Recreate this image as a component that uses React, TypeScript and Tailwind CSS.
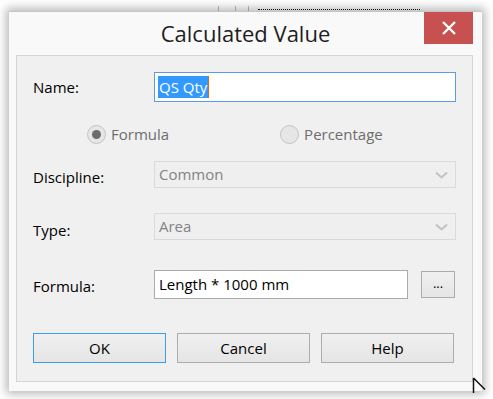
import React from "react";

const font = { fontFamily: '"Open Sans", "Noto Sans", sans-serif' };

function Chevron() {
  return (
    <svg width="13" height="8" viewBox="0 0 13 8" className="mr-[7px]">
      <path d="M1 1.5 L6.5 6.5 L12 1.5" fill="none" stroke="#c2c2c2" strokeWidth="2" />
    </svg>
  );
}

function Radio({ checked, label }: { checked?: boolean; label: string }) {
  return (
    <div className="flex items-center">
      <div className="w-[19px] h-[19px] rounded-full border border-[#c4c4c4] bg-[#e6e6e6] flex items-center justify-center">
        {checked && <div className="w-[9px] h-[9px] rounded-full bg-[#6d6d6d]" />}
      </div>
      <span className="ml-[5px] text-[15px] text-[#6d6d6d] leading-none">{label}</span>
    </div>
  );
}

export default function App() {
  return (
    <div className="w-[493px] h-[399px] bg-white relative overflow-hidden" style={font}>
      {/* background behind window */}
      <div className="absolute left-[258px] top-[9px] w-[162px] border-t border-dotted border-[#111]" />
      <div className="absolute left-[218px] top-[6px] w-[1px] h-[5px] bg-[#bbb]" />
      <div className="absolute left-[235px] top-[6px] w-[1px] h-[5px] bg-[#bbb]" />
      <div className="absolute left-[248px] top-[6px] w-[1px] h-[5px] bg-[#bbb]" />

      <div className="absolute left-[9px] top-[11px] w-[473px] h-[380px] bg-[#f9f9f9] border-t border-[#c4c4c4] shadow-[0_0_9px_3px_rgba(0,0,0,0.28)] flex flex-col">
        <div className="relative h-[43px] flex items-center justify-center">
          <span className="text-[22px] text-[#1e1e1e] leading-none pb-[2px]">Calculated Value</span>
          <div className="absolute left-[415px] top-[0px] w-[49px] h-[32px] bg-[#c75050] flex items-center justify-center">
            <svg width="14" height="14" viewBox="0 0 14 14">
              <path d="M1 1 L13 13 M13 1 L1 13" stroke="white" strokeWidth="2.4" />
            </svg>
          </div>
        </div>

        <div className="ml-[7px] mr-[9px] h-[327px] bg-[#f0f0f0] border border-[#d5d5d5] flex flex-col pl-[16px] pr-[16px] pt-[16px]">
          {/* Name */}
          <div className="flex items-center h-[30px]">
            <div className="w-[121px] text-[15px] text-black">Name:</div>
            <div className="flex-1 h-[30px] bg-white border border-[#5a9de6] flex items-center pl-[3px]">
              <span className="bg-[#3399ff] text-white text-[15px] leading-[22px] h-[22px] px-[1px] border-r border-[#e06b00]">QS Qty</span>
            </div>
          </div>

          {/* Radio row */}
          <div className="flex items-center h-[20px] mt-[22px]">
            <div className="ml-[54px]"><Radio checked label="Formula" /></div>
            <div className="ml-[111px]"><Radio label="Percentage" /></div>
          </div>

          {/* Discipline */}
          <div className="flex h-[27px] mt-[17px]">
            <div className="w-[121px] text-[15px] text-black pt-[5px] leading-[22px]">Discipline:</div>
            <div className="flex-1 h-[27px] border border-[#dadada] bg-[#efefef] flex items-center justify-between pl-[4px]">
              <span className="text-[15px] text-[#838383]">Common</span>
              <Chevron />
            </div>
          </div>

          {/* Type */}
          <div className="flex h-[27px] mt-[25px]">
            <div className="w-[121px] text-[15px] text-black pt-[6px] leading-[22px]">Type:</div>
            <div className="flex-1 h-[27px] border border-[#dadada] bg-[#efefef] flex items-center justify-between pl-[4px]">
              <span className="text-[15px] text-[#838383]">Area</span>
              <Chevron />
            </div>
          </div>

          {/* Formula */}
          <div className="flex h-[29px] mt-[30px]">
            <div className="w-[121px] text-[15px] text-black pt-[5px] leading-[22px]">Formula:</div>
            <div className="w-[254px] h-[29px] bg-white border border-[#ababab] flex items-center pl-[4px]">
              <span className="text-[15px] text-black">Length * 1000 mm</span>
            </div>
            <div className="ml-[13px] w-[34px] h-[27px] mt-[1px] border border-[#acacac] bg-gradient-to-b from-[#f0f0f0] to-[#e5e5e5] flex items-center justify-center">
              <span className="text-[13px] text-black leading-none pb-[2px]">...</span>
            </div>
          </div>

          {/* Buttons */}
          <div className="flex h-[30px] mt-[34px] gap-[11px]">
            <div className="w-[133px] h-[30px] border border-[#3c9ef0] bg-gradient-to-b from-[#f0f0f0] to-[#e5e5e5] flex items-center justify-center text-[15px] text-black">OK</div>
            <div className="w-[133px] h-[30px] border border-[#adadad] bg-gradient-to-b from-[#f0f0f0] to-[#e5e5e5] flex items-center justify-center text-[15px] text-black">Cancel</div>
            <div className="w-[133px] h-[30px] border border-[#adadad] bg-gradient-to-b from-[#f0f0f0] to-[#e5e5e5] flex items-center justify-center text-[15px] text-black">Help</div>
          </div>
        </div>
      </div>

      {/* mouse cursor */}
      <svg className="absolute left-[472px] top-[377px]" width="16" height="18" viewBox="0 0 16 18">
        <path d="M2.5 3 L2.5 14 L11 12 Z" fill="white" opacity="0.6" />
        <path d="M1.5 1 L1.5 16 M1.5 1 L13 12.5" fill="none" stroke="#111" strokeWidth="1.5" />
      </svg>
    </div>
  );
}
